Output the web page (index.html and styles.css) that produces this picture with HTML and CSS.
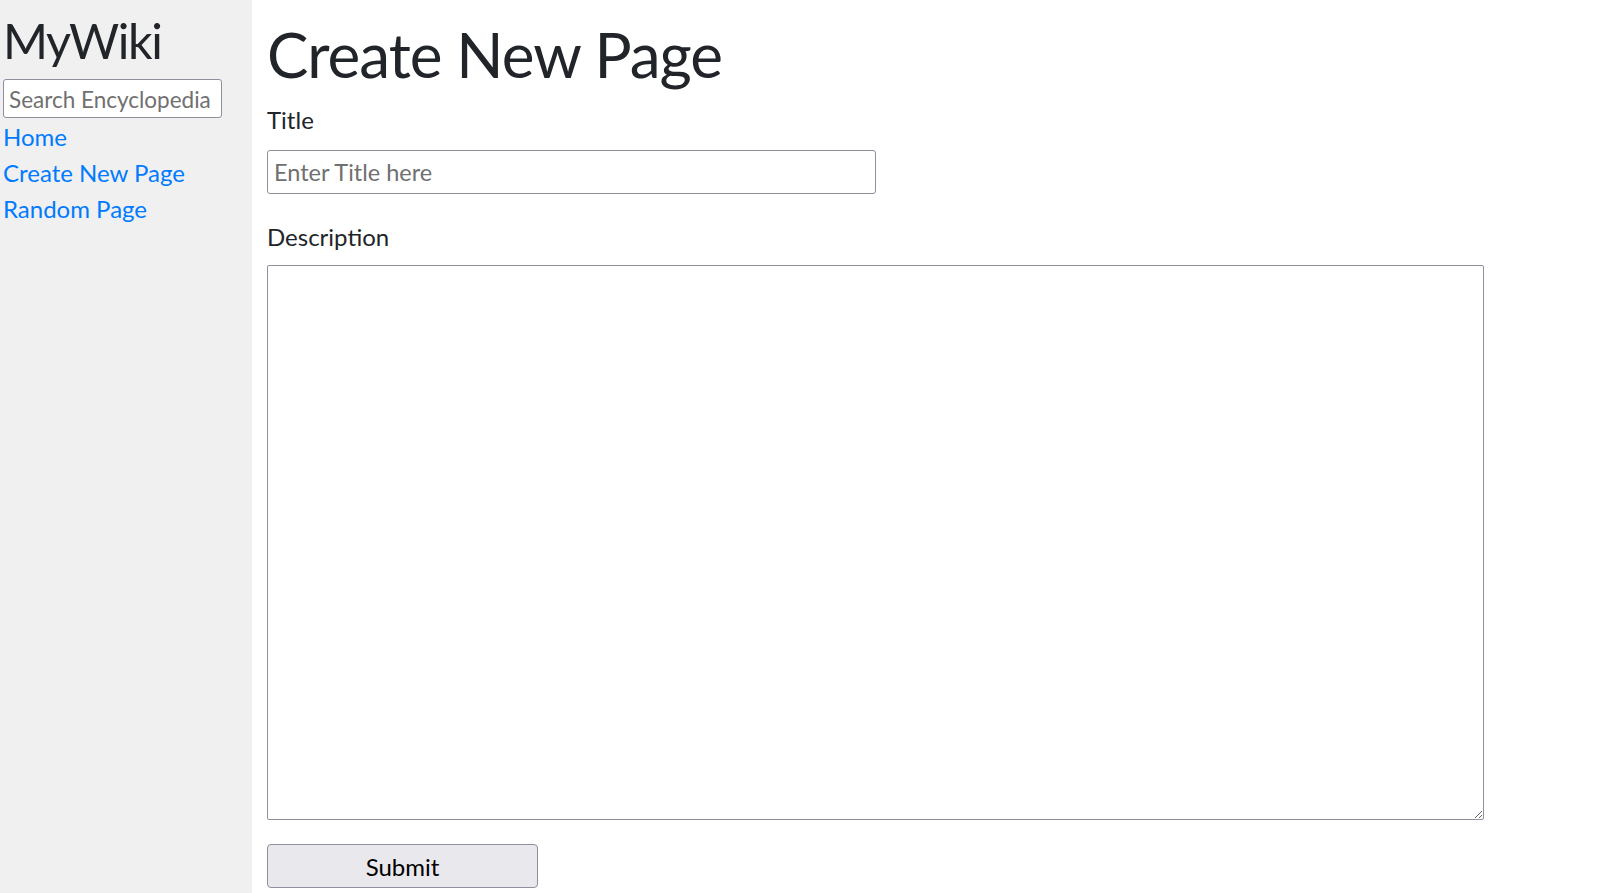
FILE: index.html
```html
<!DOCTYPE html>
<html lang="en">
<head>
<meta charset="utf-8">
<title>Create New Page</title>
<link rel="stylesheet" href="styles.css">
</head>
<body>
<div class="layout">
  <aside class="sidebar">
    <h2 class="brand">MyWiki</h2>
    <form class="search-form">
      <input class="search" type="text" name="q" placeholder="Search Encyclopedia">
    </form>
    <nav class="nav">
      <div><a href="#">Home</a></div>
      <div><a href="#">Create New Page</a></div>
      <div><a href="#">Random Page</a></div>
    </nav>
  </aside>
  <main class="main">
    <h1 class="page-title">Create New Page</h1>
    <form class="entry-form">
      <label class="field-label label-title" for="title">Title</label>
      <input class="title-input" id="title" type="text" placeholder="Enter Title here">
      <label class="field-label label-desc" for="desc">Description</label>
      <textarea class="desc-input" id="desc"></textarea>
      <button class="submit" type="submit">Submit</button>
    </form>
  </main>
</div>
</body>
</html>
```

FILE: styles.css
```css
* { box-sizing: border-box; }

html, body {
  margin: 0;
  padding: 0;
  height: 100%;
  background: #ffffff;
  font-family: Lato, "Noto Sans", sans-serif;
  color: #212529;
}

.layout {
  display: flex;
  height: 100vh;
}

.sidebar {
  width: 252px;
  flex: 0 0 252px;
  background: #f0f0f0;
  padding-left: 3px;
  display: flex;
  flex-direction: column;
}

.brand {
  margin: 10px 0 0 0;
  font-size: 48.5px;
  line-height: 60px;
  letter-spacing: -1.4px;
  font-weight: 400;
  color: #212529;
}

.search-form {
  margin: 9px 0 0 0;
}

.search {
  width: 219px;
  height: 39px;
  border: 1px solid #8f8f9d;
  border-radius: 3px;
  padding: 1px 5px 0;
  font-family: inherit;
  font-size: 22.5px;
  color: #212529;
  background: #fff;
}

.search::placeholder,
.title-input::placeholder {
  color: #707070;
  opacity: 1;
}

.nav {
  margin-top: 1px;
  font-size: 24px;
  line-height: 36px;
}

.nav a {
  color: #007bff;
  text-decoration: none;
}

.main {
  flex: 1;
  padding-left: 15px;
}

.page-title {
  margin: 16px 0 0 0;
  font-size: 62px;
  line-height: 77px;
  letter-spacing: -1px;
  font-weight: 400;
  color: #212529;
}

.entry-form {
  display: flex;
  flex-direction: column;
  align-items: flex-start;
}

.field-label {
  font-size: 24px;
  line-height: 36px;
  color: #212529;
}

.label-title { margin-top: 9px; }
.label-desc { margin-top: 25px; }

.title-input {
  margin-top: 12px;
  width: 609px;
  height: 44px;
  border: 1px solid #8f8f9d;
  border-radius: 3px;
  padding: 0 6px;
  font-family: inherit;
  font-size: 23.5px;
  color: #212529;
  background: #fff;
}

.desc-input {
  margin-top: 10px;
  width: 1217px;
  height: 555px;
  border: 1px solid #8f8f9d;
  border-radius: 2px;
  font-family: inherit;
  font-size: 24px;
  background: #fff;
}

.submit {
  margin-top: 24px;
  width: 271px;
  height: 44px;
  border: 1px solid #8f8f9d;
  border-radius: 4px;
  background: #e9e9ed;
  font-family: inherit;
  font-size: 24px;
  color: #000;
}
```
